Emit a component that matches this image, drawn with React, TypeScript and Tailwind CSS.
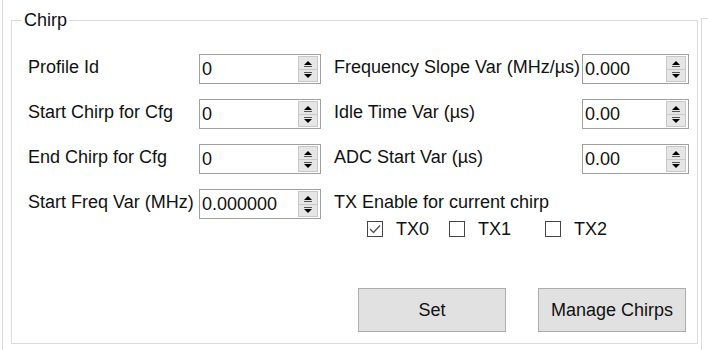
import React from 'react';

const font = { fontFamily: '"Liberation Sans", Arial, sans-serif' };

function SpinBox({ value, className }: { value: string; className: string }) {
  return (
    <div className={`flex items-center h-[30px] border border-[#a0a0a0] bg-white ${className}`}>
      <span className="flex-1 pl-[2px] text-[18px] leading-none text-[#111]">{value}</span>
      {/* up/down arrows */}
      <div className="flex flex-col w-[20px] h-[26px] mr-[2px]">
        <div className="flex-1 flex items-end justify-center bg-[#e6e6e6] border border-[#c8c8c8] pb-[2px]">
          <svg width="8" height="6" viewBox="0 0 8 6">
            <path d="M4 0 L8 4 L0 4 Z" fill="#000" />
            <rect x="0" y="5" width="8" height="1" fill="#555" />
          </svg>
        </div>
        <div className="flex-1 flex items-start justify-center bg-[#e6e6e6] border border-t-0 border-[#c8c8c8] pt-[2px]">
          <svg width="8" height="6" viewBox="0 0 8 6">
            <rect x="0" y="0" width="8" height="1" fill="#555" />
            <path d="M0 2 L8 2 L4 6 Z" fill="#000" />
          </svg>
        </div>
      </div>
    </div>
  );
}

function Check({ label, checked }: { label: string; checked?: boolean }) {
  return (
    <div className="flex items-center gap-[13px]">
      <div className="w-[16px] h-[16px] border border-[#444] bg-white flex items-center justify-center">
        {checked && (
          <svg width="12" height="10" viewBox="0 0 12 10">
            <path d="M1 5 L4.5 8.5 L11 1.5" stroke="#555" strokeWidth="1.4" fill="none" />
          </svg>
        )}
      </div>
      <span className="text-[18px] leading-none text-[#111]">{label}</span>
    </div>
  );
}

const rows = [
  { left: 'Profile Id', lv: '0', right: 'Frequency Slope Var (MHz/µs)', rv: '0.000' },
  { left: 'Start Chirp for Cfg', lv: '0', right: 'Idle Time Var (µs)', rv: '0.00' },
  { left: 'End Chirp for Cfg', lv: '0', right: 'ADC Start Var (µs)', rv: '0.00' },
  { left: 'Start Freq Var (MHz)', lv: '0.000000', right: 'TX Enable for current chirp', rv: '' },
];

export default function App() {
  return (
    <div className="w-[708px] h-[350px] bg-white flex text-[#111]" style={font}>
      <div className="ml-[2px] border-l border-[#dcdcdc] flex items-start">
        {/* Chirp group box */}
        <div className="relative ml-[8px] mt-[20px] w-[687px] h-[324px] border border-[#dcdcdc]">
          <span className="absolute left-[10px] -top-[12px] bg-white px-[2px] text-[18px] leading-[22px]">Chirp</span>

          <div className="flex flex-col pl-[16px] pt-[33px]">
            {rows.map((r, i) => (
              <div key={r.left} className={`flex items-center h-[30px] ${i > 0 ? 'mt-[15px]' : ''}`}>
                <span className="w-[171px] text-[18px] leading-none mb-[5px] whitespace-nowrap">{r.left}</span>
                <SpinBox value={r.lv} className="w-[122px]" />
                <span className="ml-[13px] w-[248px] text-[18px] leading-none mb-[5px] whitespace-nowrap">{r.right}</span>
                {r.rv && <SpinBox value={r.rv} className="w-[107px]" />}
              </div>
            ))}

            <div className="flex items-center h-[18px] mt-[1px] ml-[339px]">
              <Check label="TX0" checked />
              <div className="ml-[20px]"><Check label="TX1" /></div>
              <div className="ml-[34px]"><Check label="TX2" /></div>
            </div>

            <div className="flex mt-[50px] ml-[330px] gap-[32px]">
              <button className="w-[148px] h-[44px] bg-[#e1e1e1] border border-[#adadad] text-[18px]">Set</button>
              <button className="w-[148px] h-[44px] bg-[#e1e1e1] border border-[#adadad] text-[18px]">Manage Chirps</button>
            </div>
          </div>
        </div>

        {/* edge of the neighbouring panel */}
        <div className="ml-[3px] mt-[18px] w-[8px] h-[332px] border-l border-t border-[#dcdcdc]" />
      </div>
    </div>
  );
}
